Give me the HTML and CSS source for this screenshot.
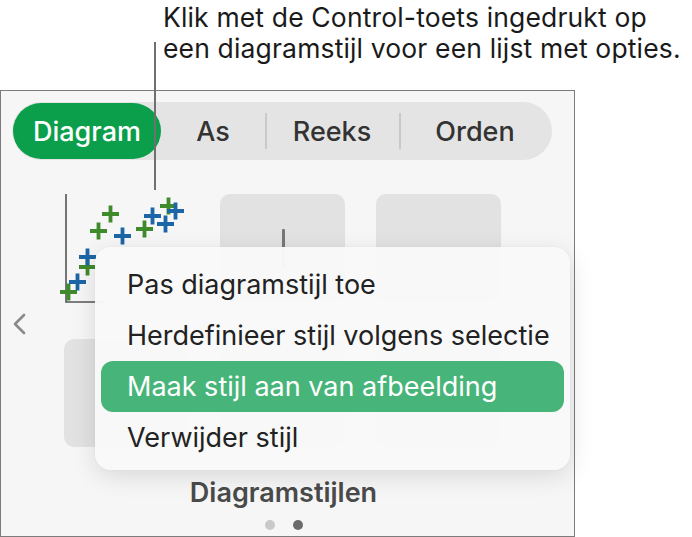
FILE: index.html
```html
<!DOCTYPE html>
<html lang="nl">

<head>
    <meta charset="UTF-8">
    <meta name="viewport" content="width=device-width, initial-scale=1.0">
    <title>Diagramstijlen</title>
    <link rel="stylesheet" href="styles.css">
</head>

<body>
    <div class="page">
        <p class="note">Klik met de Control-toets ingedrukt op<br>een diagramstijl voor een lijst met opties.</p>
        <div class="leader"></div>

        <div class="panel">
            <div class="tabs">
                <div class="tab active">Diagram</div>
                <div class="tab">As</div>
                <div class="tab sep">Reeks</div>
                <div class="tab sep">Orden</div>
            </div>

            <div class="styles-grid">
                <div class="thumb chart">
                    <svg width="125" height="108" viewBox="0 0 125 108">
                        <!-- axes -->
                        <path d="M2 0 V108 H40" fill="none" stroke="#555" stroke-width="1.6" />
                        <g stroke-width="3.8" fill="none">
                            <g stroke="#3f8a2a">
                                <path d="M38 20 h17 M46.5 11.5 v17" />
                                <path d="M26 37 h17 M34.5 28.5 v17" />
                                <path d="M72 35 h17 M80.5 26.5 v17" />
                                <path d="M96 12 h17 M104.5 3.5 v17" />
                                <path d="M15 73 h17 M23.5 64.5 v17" />
                                <path d="M-4 98 h17 M4.5 89.5 v17" />
                            </g>
                            <g stroke="#1c65a6">
                                <path d="M50 42 h17 M58.5 33.5 v17" />
                                <path d="M80 22 h17 M88.5 13.5 v17" />
                                <path d="M93 30 h17 M101.5 21.5 v17" />
                                <path d="M103 17 h17 M111.5 8.5 v17" />
                                <path d="M15 63 h17 M23.5 54.5 v17" />
                                <path d="M5 88 h17 M13.5 79.5 v17" />
                            </g>
                        </g>
                    </svg>
                </div>
                <div class="thumb"><span class="bar"></span></div>
                <div class="thumb"></div>
                <div class="thumb"></div>
                <div class="thumb"></div>
                <div class="thumb"></div>
            </div>

            <svg class="prev" width="16" height="22" viewBox="0 0 16 22">
                <path d="M13 2 L4 11 L13 20" fill="none" stroke="#8a8a8a" stroke-width="2.6" stroke-linecap="round" stroke-linejoin="round" />
            </svg>

            <div class="panel-title">Diagramstijlen</div>
            <div class="dots">
                <span class="dot"></span>
                <span class="dot current"></span>
            </div>

            <ul class="context-menu">
                <li>Pas diagramstijl toe</li>
                <li>Herdefinieer stijl volgens selectie</li>
                <li class="selected">Maak stijl aan van afbeelding</li>
                <li>Verwijder stijl</li>
            </ul>
        </div>
    </div>
</body>

</html>
```

FILE: styles.css
```css
body {
    margin: 0;
    padding: 0;
    background-color: #fff;
    font-family: 'Inter', 'Helvetica Neue', Arial, sans-serif;
    color: #1d1d1f;
}

.page {
    position: relative;
    width: 692px;
    height: 537px;
    overflow: hidden;
}

.note {
    margin: 0;
    height: 90px;
    padding: 2px 0 0 163px;
    box-sizing: border-box;
    font-size: 26.5px;
    line-height: 31px;
    letter-spacing: 0.15px;
    color: #1a1a1a;
    white-space: nowrap;
}

.leader {
    position: absolute;
    left: 154px;
    top: 42px;
    width: 2px;
    height: 148px;
    background-color: #707070;
    z-index: 5;
}

.panel {
    position: relative;
    width: 575px;
    height: 447px;
    box-sizing: border-box;
    border: 1px solid #7c7c7c;
    background-color: #f6f6f6;
}

.tabs {
    display: grid;
    grid-template-columns: 148px 104px 134px 1fr;
    align-items: center;
    margin: 11px 22px 0 11px;
    height: 58px;
    padding: 1px;
    box-sizing: border-box;
    border-radius: 29px;
    background-color: #e4e4e4;
}

.tab {
    position: relative;
    height: 100%;
    display: flex;
    align-items: center;
    justify-content: center;
    font-size: 27px;
    font-weight: 500;
    color: #333;
}

.tab.active {
    background-color: #0b9f4b;
    color: #fff;
    border-radius: 28px;
}

.tab.sep::before {
    content: '';
    position: absolute;
    left: 0;
    top: 10px;
    bottom: 10px;
    width: 1.5px;
    background-color: #c9c9c9;
}

.styles-grid {
    display: grid;
    grid-template-columns: repeat(3, 125px);
    grid-auto-rows: 108px;
    column-gap: 31px;
    row-gap: 37px;
    margin: 34px 0 0 63px;
}

.thumb {
    position: relative;
    border-radius: 10px;
    background-color: #e2e2e2;
}

.thumb.chart {
    background: none;
    border-radius: 0;
}

.thumb.chart svg {
    display: block;
    overflow: visible;
}

.bar {
    position: absolute;
    left: 62px;
    top: 35px;
    width: 3px;
    height: 40px;
    border-radius: 1px;
    background-color: #777;
}

.prev {
    position: absolute;
    left: 10px;
    top: 222px;
}

.panel-title {
    margin-top: 30px;
    padding-right: 8px;
    text-align: center;
    font-size: 27px;
    line-height: 32px;
    font-weight: 600;
    color: #4a4a4a;
}

.dots {
    display: flex;
    justify-content: center;
    gap: 18px;
    margin-top: 11px;
    padding-right: 8px;
}

.dot {
    width: 10px;
    height: 10px;
    border-radius: 50%;
    background-color: #c9c9c9;
}

.dot.current {
    background-color: #6b6b6b;
}

.context-menu {
    position: absolute;
    left: 94px;
    top: 156px;
    width: 475px;
    margin: 0;
    padding: 12px 6px 7px;
    box-sizing: border-box;
    list-style: none;
    border-radius: 16px;
    background-color: rgba(249, 249, 249, 0.97);
    box-shadow: 0 6px 24px rgba(0, 0, 0, 0.12), 0 0 2px rgba(0, 0, 0, 0.06);
}

.context-menu li {
    height: 51px;
    display: flex;
    align-items: center;
    padding-left: 26px;
    border-radius: 12px;
    font-size: 27px;
    color: #222;
}

.context-menu li.selected {
    background-color: #47b57a;
    color: #fff;
}
```
